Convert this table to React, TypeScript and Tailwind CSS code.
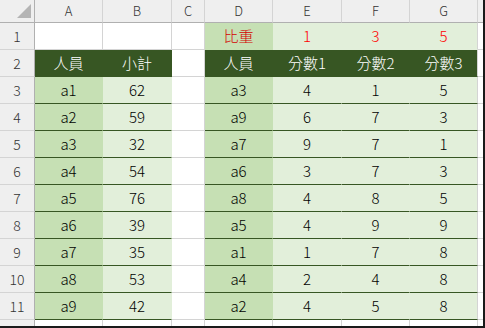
const widths = [
  "w-[35px]",
  "w-[68px]",
  "w-[69px]",
  "w-[33px]",
  "w-[68px]",
  "w-[69px]",
  "w-[68px]",
  "w-[68px]",
];

const left = [
  ["a1", "62"],
  ["a2", "59"],
  ["a3", "32"],
  ["a4", "54"],
  ["a5", "76"],
  ["a6", "39"],
  ["a7", "35"],
  ["a8", "53"],
  ["a9", "42"],
];

const right = [
  ["a3", "4", "1", "5"],
  ["a9", "6", "7", "3"],
  ["a7", "9", "7", "1"],
  ["a6", "3", "7", "3"],
  ["a8", "4", "8", "5"],
  ["a5", "4", "9", "9"],
  ["a1", "1", "7", "8"],
  ["a4", "2", "4", "8"],
  ["a2", "4", "5", "8"],
];

const white = "bg-white border-r border-b border-[#d4d4d4]";
const dark = "bg-[#375623] text-white border-r border-b border-[#375623]";
const dataA = "bg-[#c6e0b4] text-black border-b border-b-[#375623] border-r border-r-[#c6e0b4]";
const dataB = "bg-[#e2efda] text-black border-b border-b-[#375623] border-r border-r-[#e2efda]";
const dataBEnd = "bg-[#e2efda] text-black border-b border-b-[#375623] border-r border-r-[#d4d4d4]";

function Cell({ w, cls, children }: { w: string; cls: string; children?: React.ReactNode }) {
  return (
    <div className={`${w} ${cls} flex h-full shrink-0 items-center justify-center`}>
      {children}
    </div>
  );
}

function RowHead({ n }: { n?: number }) {
  return (
    <div className="flex h-full w-[35px] shrink-0 items-end justify-center border-r border-b border-r-[#b0b0b0] border-b-[#d4d4d4] bg-[#efefef] pb-[2px] text-[14px] text-[#333]">
      {n}
    </div>
  );
}

function Filler() {
  return <div className="h-full flex-1 border-b border-[#d4d4d4] bg-white" />;
}

export default function App() {
  return (
    <div
      className="flex h-[328px] w-[485px] flex-col overflow-hidden border-r-2 border-b-2 border-[#1a1a1a] bg-white text-[15px] font-light"
      style={{ fontFamily: '"Noto Sans CJK TC", "Noto Sans", sans-serif' }}
    >
      {/* column letters */}
      <div className="flex h-[23px] shrink-0 text-[13px] text-[#333]">
        <div className="relative h-full w-[35px] shrink-0 border-r border-b border-[#b0b0b0] bg-[#efefef]">
          <svg className="absolute right-[3px] bottom-[4px]" width="14" height="14" viewBox="0 0 14 14">
            <polygon points="14,0 14,14 0,14" fill="#b4b4b4" />
          </svg>
        </div>
        {["A", "B", "C", "D", "E", "F", "G"].map((l, i) => (
          <div
            key={l}
            className={`${widths[i + 1]} flex h-full shrink-0 items-center justify-center border-r border-b border-r-[#d4d4d4] border-b-[#b0b0b0] bg-[#efefef]`}
          >
            {l}
          </div>
        ))}
        <div className="h-full flex-1 border-b border-[#b0b0b0] bg-[#efefef]" />
      </div>

      {/* row 1 */}
      <div className="flex h-[27px] shrink-0">
        <RowHead n={1} />
        <Cell w={widths[1]} cls={white} />
        <Cell w={widths[2]} cls={white} />
        <Cell w={widths[3]} cls={white} />
        <Cell w={widths[4]} cls="bg-[#c6e0b4] text-[#d40000] border-r border-b border-[#c6e0b4]">
          比重
        </Cell>
        <Cell w={widths[5]} cls="bg-[#e2efda] text-[#f00] border-r border-b border-[#e2efda]">
          1
        </Cell>
        <Cell w={widths[6]} cls="bg-[#e2efda] text-[#f00] border-r border-b border-[#e2efda]">
          3
        </Cell>
        <Cell w={widths[7]} cls="bg-[#e2efda] text-[#f00] border-b border-b-[#e2efda] border-r border-r-[#d4d4d4]">
          5
        </Cell>
        <Filler />
      </div>

      {/* row 2 header */}
      <div className="flex h-[27px] shrink-0">
        <RowHead n={2} />
        <Cell w={widths[1]} cls={dark}>人員</Cell>
        <Cell w={widths[2]} cls={dark}>小計</Cell>
        <Cell w={widths[3]} cls={white} />
        <Cell w={widths[4]} cls={dark}>人員</Cell>
        <Cell w={widths[5]} cls={dark}>分數1</Cell>
        <Cell w={widths[6]} cls={dark}>分數2</Cell>
        <Cell w={widths[7]} cls={`${dark} border-r-[#d4d4d4]`}>分數3</Cell>
        <Filler />
      </div>

      {left.map((row, i) => (
        <div key={i} className="flex h-[27px] shrink-0">
          <RowHead n={i + 3} />
          <Cell w={widths[1]} cls={dataA}>{row[0]}</Cell>
          <Cell w={widths[2]} cls={dataB}>{row[1]}</Cell>
          <Cell w={widths[3]} cls={white} />
          <Cell w={widths[4]} cls={dataA}>{right[i][0]}</Cell>
          <Cell w={widths[5]} cls={dataB}>{right[i][1]}</Cell>
          <Cell w={widths[6]} cls={dataB}>{right[i][2]}</Cell>
          <Cell w={widths[7]} cls={dataBEnd}>{right[i][3]}</Cell>
          <Filler />
        </div>
      ))}

      {/* row 12, partly visible */}
      <div className="flex min-h-0 flex-1">
        <div className="h-[27px] w-[35px] shrink-0 border-r border-[#b0b0b0] bg-[#efefef]" />
        {widths.slice(1).map((w, i) => (
          <div key={i} className={`${w} h-[27px] shrink-0 border-r border-[#d4d4d4] bg-white`} />
        ))}
        <div className="flex-1 bg-white" />
      </div>
    </div>
  );
}
